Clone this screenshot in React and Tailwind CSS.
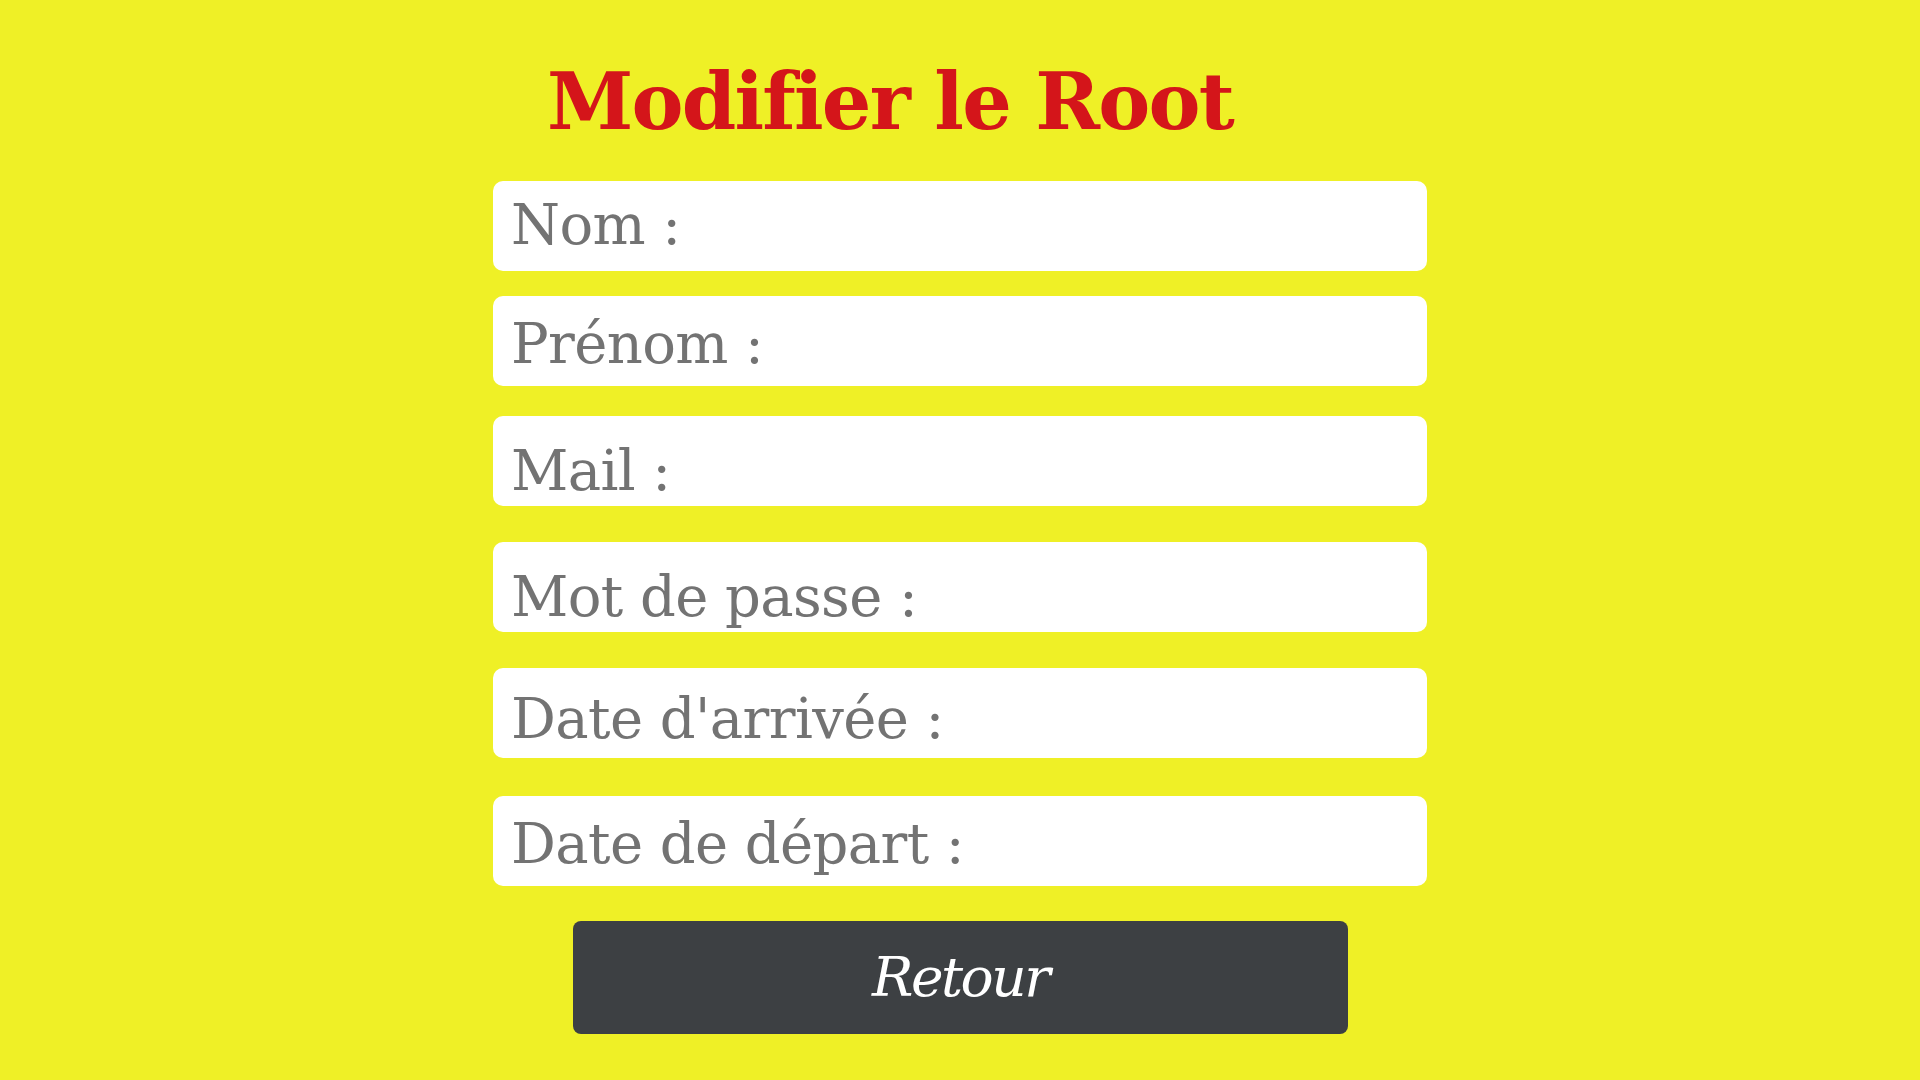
export default function App() {
  const rows = [
    { label: "Nom :", mt: "mt-[40px]", pt: "pt-[16px]" },
    { label: "Prénom :", mt: "mt-[25px]", pt: "pt-[20px]" },
    { label: "Mail :", mt: "mt-[30px]", pt: "pt-[27px]" },
    { label: "Mot de passe :", mt: "mt-[36px]", pt: "pt-[27px]" },
    { label: "Date d'arrivée :", mt: "mt-[36px]", pt: "pt-[23px]" },
    { label: "Date de départ :", mt: "mt-[38px]", pt: "pt-[20px]" },
  ];
  return (
    <div className="w-full h-[1080px] bg-[#eff026] flex flex-col items-center overflow-hidden" style={{ fontFamily: '"DejaVu Serif", serif' }}>
      <h1 className="w-full pt-[63px] pr-[140px] text-center text-[78px] leading-none font-bold tracking-[-1.8px] text-[#d4151a]">
        Modifier le Root
      </h1>
      {rows.map((r) => (
        <div key={r.label} className={`w-[934px] h-[90px] bg-white rounded-[10px] ${r.mt} ${r.pt} pl-[18px]`}>
          <div className="text-[56px] leading-none tracking-[-0.6px] text-[#737373] whitespace-nowrap">{r.label}</div>
        </div>
      ))}
      <button className="mt-[35px] w-[775px] h-[113px] bg-[#3d4043] rounded-[8px] flex items-center justify-center text-white italic text-[55px] leading-none tracking-[-2.5px]">
        Retour
      </button>
    </div>
  );
}
